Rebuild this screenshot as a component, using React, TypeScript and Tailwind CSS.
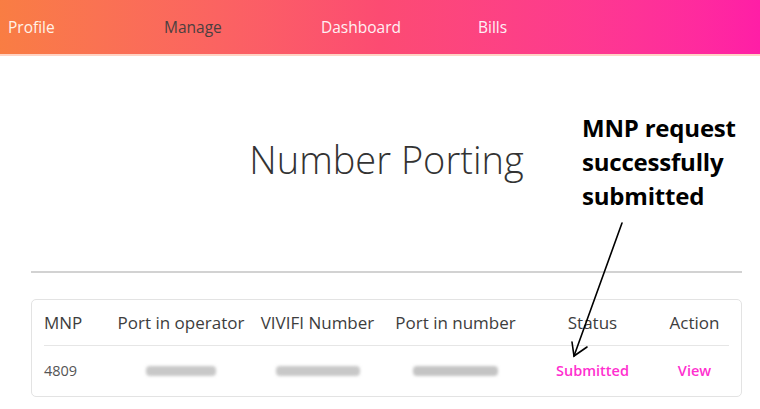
export default function App() {
  const cols = "grid grid-cols-[69px_136px_137px_139px_135px_69px]";

  return (
    <div className="relative w-[760px] h-[409px] overflow-hidden bg-white font-['Open_Sans',sans-serif]">
      {/* Top nav */}
      <nav className="flex h-[56px] items-center border-b-2 border-[#ffd3c4] bg-gradient-to-r from-[#f97d43] via-[#fc4b72] to-[#ff1ea6] pl-[8px] pt-[2px] text-[15.5px]">
        <a className="w-[156px] text-[#fff3e8]">Profile</a>
        <a className="w-[157px] text-[#4b4040]">Manage</a>
        <a className="w-[157px] text-[#fff0f4]">Dashboard</a>
        <a className="w-[157px] text-[#fff0f6]">Bills</a>
      </nav>

      <main className="ml-[31px] mr-[18px]">
        <div className="flex h-[215px] items-start justify-center pt-[77px]">
          <h1 className="text-[38px] font-light leading-[52px] text-[#333]">Number Porting</h1>
        </div>

        <hr className="border-t-2 border-[#d2d2d2]" />

        <div className="mt-[26px] rounded-[5px] border border-[#e3e3e3] px-[12px]">
          <div className={`${cols} h-[46px] items-center border-b border-[#e6e6e6] text-[17px] font-medium text-[#3d3d3d]`}>
            <div>MNP</div>
            <div className="text-center">Port in operator</div>
            <div className="text-center">VIVIFI Number</div>
            <div className="text-center">Port in number</div>
            <div className="text-center">Status</div>
            <div className="text-center">Action</div>
          </div>
          <div className={`${cols} h-[50px] items-center text-[14.5px] text-[#555]`}>
            <div>4809</div>
            <div className="flex justify-center">
              <div className="h-[10px] w-[70px] rounded-sm bg-[#c8c8c8] blur-[1.5px]" />
            </div>
            <div className="flex justify-center">
              <div className="h-[10px] w-[84px] rounded-sm bg-[#c8c8c8] blur-[1.5px]" />
            </div>
            <div className="flex justify-center">
              <div className="h-[10px] w-[85px] rounded-sm bg-[#c4c4c4] blur-[1.5px]" />
            </div>
            <div className="text-center text-[14.5px] font-semibold text-[#ff2fcf]">Submitted</div>
            <div className="text-center text-[14.5px] font-semibold text-[#ff2fcf]">View</div>
          </div>
        </div>
      </main>

      {/* Annotation overlay */}
      <div className="absolute left-[582px] top-[111px] font-['Open_Sans',sans-serif] text-[24px] font-bold leading-[34px] tracking-[-0.2px] text-black">
        MNP request
        <br />
        successfully
        <br />
        submitted
      </div>
      <svg className="absolute left-0 top-0" width="760" height="409" fill="none" stroke="#000" strokeWidth="1.6" strokeLinecap="round">
        <path d="M622 223 L574 356" />
        <path d="M572 342 L574 356 L587 347" />
      </svg>
    </div>
  );
}
